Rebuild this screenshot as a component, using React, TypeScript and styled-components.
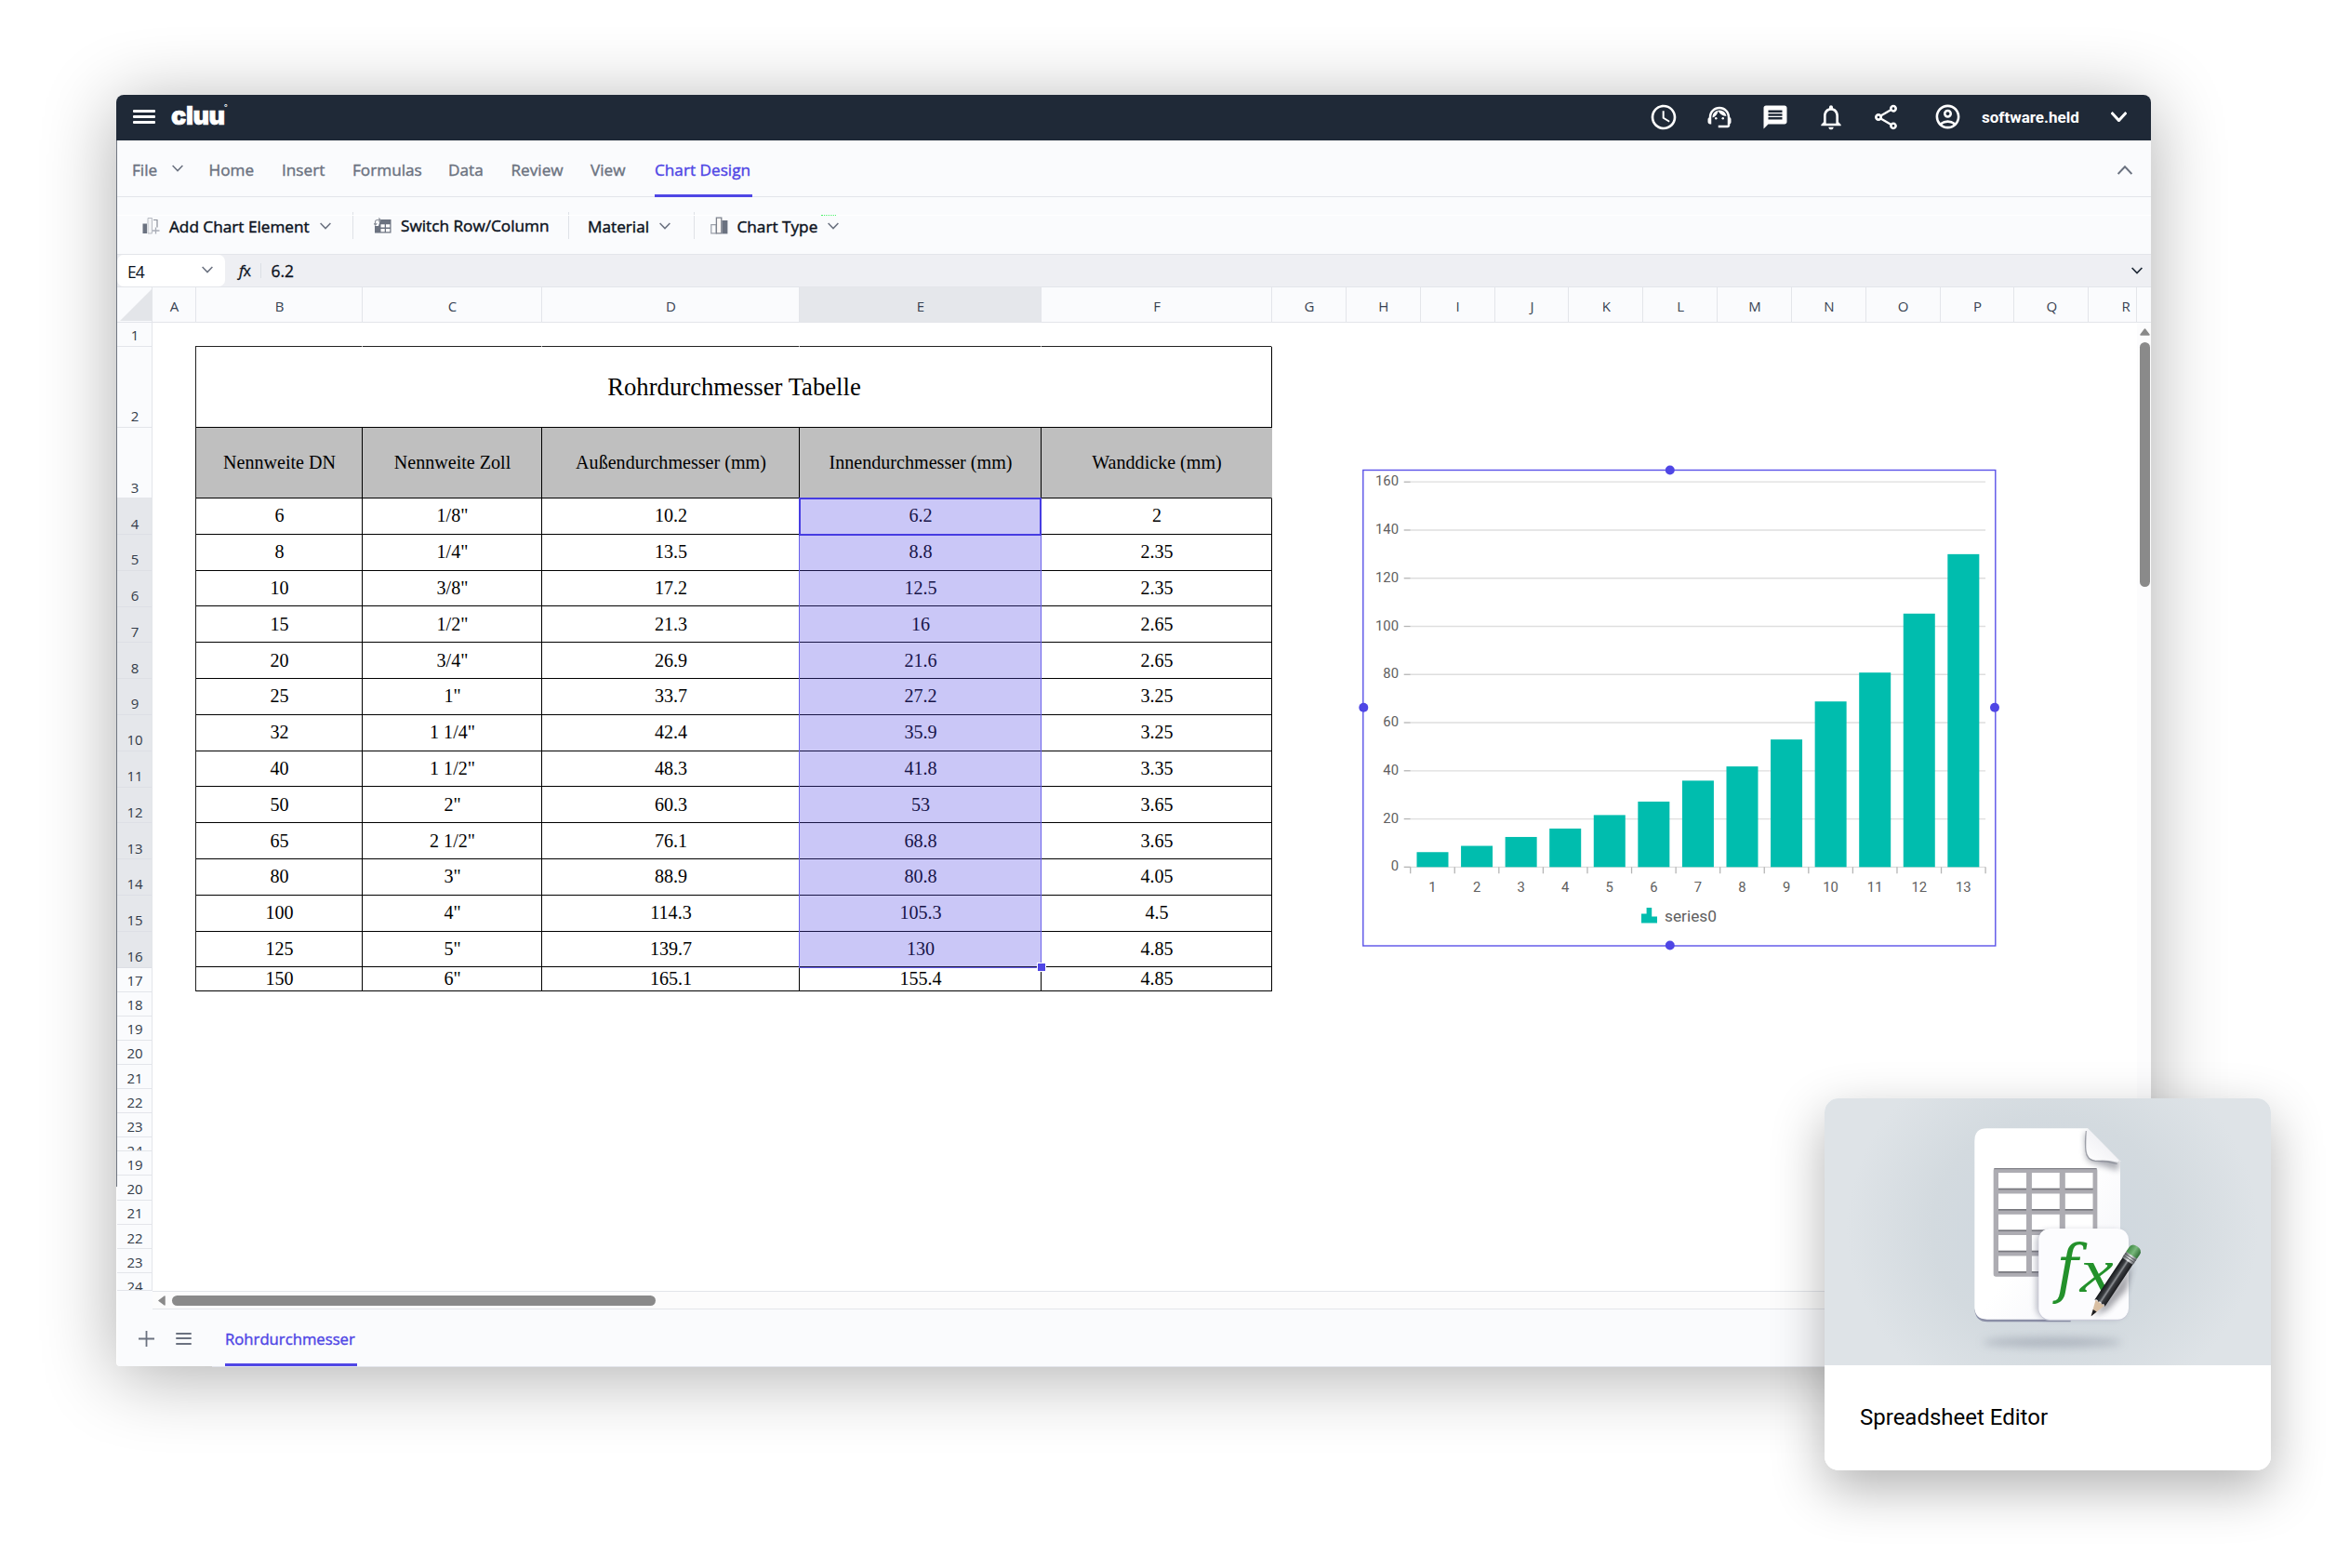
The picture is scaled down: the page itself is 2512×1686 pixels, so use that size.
import React from 'react';
import styled, { createGlobalStyle } from 'styled-components';
import {
  MdAccessTime,
  MdMessage,
  MdNotificationsNone,
  MdOutlineAccountCircle,
  MdOutlineShare,
  MdSupportAgent,
} from 'react-icons/md';

const UI = `'Open Sans', 'Noto Sans', sans-serif`;
const LINE = '#e3e5ea';
const ACCENT = '#4f46e5';

const GlobalStyle = createGlobalStyle`
  body { margin: 0; background: #fff; overflow: hidden; }
  *, *::before, *::after { box-sizing: border-box; }
`;

const Stage = styled.main`
  position: relative;
  width: 2512px;
  height: 1686px;
  padding: 102px 0 0 125px;
  overflow: hidden;
  background: #fff;
  font-family: ${UI};
`;

const Window = styled.section`
  display: flex;
  flex-direction: column;
  width: 2188px;
  height: 1367px;
  border-radius: 8px 8px 4px 4px;
  box-shadow: 0 10px 80px rgba(0, 0, 0, 0.32);
`;

/* ---------- top bar ---------- */

const TopBar = styled.header`
  display: flex;
  align-items: center;
  flex: none;
  height: 49px;
  padding: 0 26px 2px 18px;
  border-radius: 8px 8px 0 0;
  background: #1f2937;
  color: #fff;
`;

const Bars = styled.span<{ $w: number; $gap: number; $t: number; $color: string; $left?: number }>`
  display: flex;
  flex-direction: column;
  gap: ${(p) => p.$gap}px;
  width: ${(p) => p.$w}px;
  margin-left: ${(p) => p.$left ?? 0}px;
  i {
    height: ${(p) => p.$t}px;
    border-radius: 1px;
    background: ${(p) => p.$color};
  }
`;

const Logo = styled.span`
  display: flex;
  margin: -2px 0 0 17px;
  font: 900 27px/30px Inter, sans-serif;
  letter-spacing: -0.4px;
  -webkit-text-stroke: 0.6px #fff;
  sup {
    margin: 0 0 0 -1px;
    font: 400 9px/12px Inter, sans-serif;
    -webkit-text-stroke: 0;
  }
`;

const TopActions = styled.nav`
  display: flex;
  align-items: center;
  margin-left: auto;
`;

const TopIcon = styled.span<{ $w: number }>`
  display: flex;
  justify-content: center;
  width: ${(p) => p.$w}px;
`;

const Account = styled.span`
  width: 139px;
  font: 700 17px/24px Roboto, sans-serif;
`;

/* ---------- ribbon ---------- */

const Body = styled.div`
  position: relative;
  display: flex;
  flex-direction: column;
  flex: 1;
  min-height: 0;
  margin-left: 1px;
  border-radius: 0 0 4px 4px;
  background: #fafbfd;
  &::before {
    content: '';
    position: absolute;
    top: 0;
    left: -1px;
    width: 1px;
    height: 1125px;
    background: #6f7580;
  }
`;

const Tabs = styled.nav`
  display: flex;
  flex: none;
  gap: 30px;
  height: 61px;
  padding: 0 20px 0 16px;
  border-bottom: 1px solid ${LINE};
`;

const Tab = styled.span<{ $w: number; $active?: boolean }>`
  display: flex;
  align-items: center;
  justify-content: space-between;
  width: ${(p) => p.$w}px;
  height: 61px;
  padding-top: 4px;
  border-bottom: 3px solid ${(p) => (p.$active ? ACCENT : 'transparent')};
  color: ${(p) => (p.$active ? ACCENT : '#6b7280')};
  font-size: 17.2px;
  -webkit-text-stroke: 0.4px currentColor;
  white-space: nowrap;
  svg { margin-top: -2px; }
  &:first-child { margin-right: -2.5px; }
`;

const Collapse = styled.span`
  display: flex;
  align-items: center;
  margin-left: auto;
  padding-top: 3px;
`;

const Toolbar = styled.div`
  position: relative;
  display: flex;
  align-items: center;
  flex: none;
  height: 62px;
  border-bottom: 1px solid ${LINE};
  &::after {
    content: '';
    position: absolute;
    top: 19px;
    left: 0;
    right: 0;
    height: 1px;
    background: #fff;
  }
`;

const Spark = styled.i`
  position: absolute;
  z-index: 1;
  top: 19px;
  left: 757px;
  width: 16px;
  border-top: 1px dotted #4bf36b;
`;

const Tool = styled.span<{ $w: number; $pad: number; $up?: boolean }>`
  display: flex;
  align-items: center;
  width: ${(p) => p.$w}px;
  height: 29px;
  padding-left: ${(p) => p.$pad}px;
  border-right: 1px solid #dfe2e7;
  color: #0b1220;
  font-size: 17.2px;
  -webkit-text-stroke: 0.45px currentColor;
  white-space: nowrap;
  > svg:first-child { margin-right: 10px; }
  b {
    margin: ${(p) => (p.$up ? '0' : '2px')} 11px 0 0;
    font-weight: 400;
  }
  &:last-of-type { border-right: 0; }
`;

const FormulaBar = styled.div`
  display: flex;
  align-items: center;
  flex: none;
  height: 35px;
  padding-right: 9px;
  border-bottom: 1px solid ${LINE};
  background: #eeeff3;
  color: #0b1220;
  font-size: 17.4px;
`;

const NameBox = styled.span`
  display: flex;
  align-items: center;
  justify-content: space-between;
  width: 116px;
  height: 34px;
  padding: 1px 13px 0 11px;
  border-radius: 7px;
  background: #fff;
  letter-spacing: -0.8px;
  svg { margin-top: -3px; }
`;

const Fx = styled.span`
  width: 39px;
  padding-left: 15px;
  letter-spacing: -0.6px;
  font-size: 16px;
  line-height: 16px;
  border-right: 1px solid #dcdfe5;
  -webkit-text-stroke: 0.3px currentColor;
  em { font: italic 400 16.5px/16px ${UI}; }
`;

const FormulaValue = styled.span`
  flex: 1;
  padding: 0 0 0 10.5px;
  -webkit-text-stroke: 0.3px currentColor;
`;

/* ---------- sheet ---------- */

const ColumnHeads = styled.div`
  display: flex;
  flex: none;
  height: 38px;
  border-bottom: 1px solid ${LINE};
`;

const Corner = styled.span`
  flex: none;
  width: 38px;
  padding: 2px 0 0 3px;
  border-right: 1px solid ${LINE};
  svg { display: block; }
`;

const HeadCell = styled.span<{ $w: number; $on?: boolean }>`
  display: flex;
  align-items: center;
  justify-content: center;
  flex: none;
  width: ${(p) => p.$w}px;
  padding: 2px 0 0 1px;
  border-right: 1px solid ${LINE};
  background: ${(p) => (p.$on ? '#e5e7eb' : 'transparent')};
  color: #374151;
  font-size: 15px;
`;

const HeadClip = styled.div`
  display: flex;
  width: 2134px;
  overflow: hidden;
  border-right: 1px solid ${LINE};
`;

const SheetRow = styled.div`
  display: flex;
  flex: none;
  height: 1041px;
`;

const RowHeads = styled.div`
  flex: none;
  width: 38px;
  border-right: 1px solid ${LINE};
`;

const RowGroup = styled.div<{ $h: number }>`
  height: ${(p) => p.$h}px;
  overflow: hidden;
  border-bottom: 1px solid ${LINE};
`;

const RowHead = styled.div<{ $h: number; $on?: boolean }>`
  display: flex;
  align-items: flex-end;
  justify-content: center;
  height: ${(p) => p.$h}px;
  padding: 0 0 1.6px 1px;
  border-bottom: 1px solid ${(p) => (p.$on ? '#dddfe5' : LINE)};
  background: ${(p) => (p.$on ? '#e5e7eb' : '#fafbfd')};
  color: #333b48;
  font-size: 15px;
  line-height: 20px;
`;

const Canvas = styled.div`
  position: relative;
  flex: 1;
  background: #fff;
`;

const Table = styled.div`
  position: relative;
  width: 1158px;
  margin: 25px 0 0 46px;
  border-left: 1px solid #222;
  color: #000;
  font: 20.1px/24px 'Liberation Serif', serif;
`;

const Line = styled.div<{ $h: number }>`
  display: flex;
  height: ${(p) => p.$h}px;
`;

const TopEdge = styled.div`
  display: flex;
  height: 1px;
`;

const EdgePart = styled.span<{ $w: number }>`
  width: ${(p) => p.$w}px;
  border-right: 1px solid #bbb;
  background: #222;
`;

const Cell = styled.span<{ $w?: number; $head?: boolean; $title?: boolean }>`
  display: flex;
  align-items: center;
  justify-content: center;
  flex: ${(p) => (p.$w ? 'none' : 1)};
  width: ${(p) => (p.$w ? `${p.$w}px` : 'auto')};
  padding: 0 0 1px 1px;
  border-right: 1px solid #000;
  border-bottom: 1px solid #000;
  background: ${(p) => (p.$head ? '#bfbfbf' : 'transparent')};
  font-size: ${(p) => (p.$title ? '26.7px' : 'inherit')};
  white-space: nowrap;
  ${(p) => p.$head && '&:last-child { border-right-color: #bfbfbf; }'}
`;

const Selection = styled.div`
  position: absolute;
  top: 163px;
  left: 648px;
  width: 261px;
  height: 506px;
  border: 1px solid #6a61ea;
  background: rgba(79, 70, 229, 0.3);
  &::before {
    content: '';
    position: absolute;
    top: -1px;
    left: -1px;
    width: 261px;
    height: 41px;
    border: 2px solid #463ce2;
  }
  &::after {
    content: '';
    position: absolute;
    right: -6px;
    bottom: -5px;
    width: 10px;
    height: 10px;
    border: 1px solid #fff;
    background: ${ACCENT};
  }
`;

const ChartObject = styled.figure`
  position: absolute;
  top: 151px;
  left: 1301px;
  margin: 0;
  svg { display: block; overflow: visible; }
  text { font-family: Roboto, sans-serif; }
`;

const VScroll = styled.div`
  display: flex;
  flex-direction: column;
  flex: none;
  align-items: center;
  gap: 7px;
  width: 15px;
  padding: 6px 0 0 2px;
  background: #fcfcfd;
`;

const Thumb = styled.span<{ $w: number; $h: number }>`
  flex: none;
  width: ${(p) => p.$w}px;
  height: ${(p) => p.$h}px;
  border-radius: 6px;
  background: #8a8a8a;
`;

const HScroll = styled.div`
  display: flex;
  align-items: center;
  flex: none;
  gap: 7px;
  height: 20px;
  padding-left: 6px;
  margin-left: 38px;
  border-top: 1px solid ${LINE};
  border-bottom: 1px solid ${LINE};
  background: #fcfcfc;
  box-shadow: -38px 0 0 #fafbfd, -38px -1px 0 ${LINE};
`;

const Footer = styled.footer`
  display: flex;
  align-items: center;
  flex: 1;
  padding-left: 23px;
`;

const SheetTabs = styled.div`
  display: flex;
  flex: 1;
  align-self: stretch;
  margin-left: 22px;
  padding-left: 14px;
  border-bottom: 1px solid #e2e4ea;
`;

const SheetTab = styled.span`
  display: flex;
  align-items: center;
  width: 142px;
  height: 61px;
  padding-top: 4px;
  border-bottom: 3px solid ${ACCENT};
  color: ${ACCENT};
  font-size: 16.7px;
  -webkit-text-stroke: 0.4px currentColor;
`;

/* ---------- product card ---------- */

const Card = styled.article`
  position: absolute;
  top: 1181px;
  left: 1962px;
  width: 480px;
  height: 400px;
  overflow: hidden;
  border-radius: 15px;
  background: #fff;
`;

const CardShadow = styled(Card)`
  overflow: visible;
  box-shadow: 0 20px 56px rgba(0, 0, 0, 0.3);
`;

const CardArt = styled.div`
  height: 287px;
  background: radial-gradient(ellipse 260px 240px at 245px 140px, #cdd6df 0%, #d3dadf 50%, #dee3e7 85%);
  svg { display: block; }
`;

const CardTitle = styled.h2`
  margin: 0;
  padding: 40px 38px;
  color: #000;
  font: 400 24px/32px Roboto, sans-serif;
`;

/* ---------- data ---------- */

const COLS = [179, 193, 277, 260, 248];
const LETTERS: [string, number][] = [
  ['A', 47], ['B', 179], ['C', 193], ['D', 277], ['E', 260], ['F', 248],
];
const REST = 'GHIJKLMNOPQR'.split('');
const HEADERS = ['Nennweite DN', 'Nennweite Zoll', 'Außendurchmesser (mm)', 'Innendurchmesser (mm)', 'Wanddicke (mm)'];
const ROWS = [
  ['6', '1/8"', '10.2', '6.2', '2'],
  ['8', '1/4"', '13.5', '8.8', '2.35'],
  ['10', '3/8"', '17.2', '12.5', '2.35'],
  ['15', '1/2"', '21.3', '16', '2.65'],
  ['20', '3/4"', '26.9', '21.6', '2.65'],
  ['25', '1"', '33.7', '27.2', '3.25'],
  ['32', '1 1/4"', '42.4', '35.9', '3.25'],
  ['40', '1 1/2"', '48.3', '41.8', '3.35'],
  ['50', '2"', '60.3', '53', '3.65'],
  ['65', '2 1/2"', '76.1', '68.8', '3.65'],
  ['80', '3"', '88.9', '80.8', '4.05'],
  ['100', '4"', '114.3', '105.3', '4.5'],
  ['125', '5"', '139.7', '130', '4.85'],
  ['150', '6"', '165.1', '155.4', '4.85'],
];
const TABS: [string, number][] = [
  ['Home', 48.5], ['Insert', 46], ['Formulas', 73], ['Data', 37.5], ['Review', 55.5], ['View', 39],
];
const SERIES = ROWS.slice(0, 13).map((r) => Number(r[3]));

const rowHeight = (n: number) => {
  if (n === 1) return 26;
  if (n === 2) return 87;
  if (n === 3) return 76.3;
  return n <= 16 ? 38.8 : 26.1;
};
const range = (from: number, to: number) => Array.from({ length: to - from + 1 }, (_, i) => from + i);

/* ---------- drawings ---------- */

const Chevron = ({ w = 12, h = 6, up = false, color = '#6b7280', t = 1.5 }) => (
  <svg width={w} height={h + 2} viewBox={`0 0 ${w} ${h + 2}`} fill="none" stroke={color} strokeWidth={t}>
    <path d={up ? `M.6 ${h + 1}L${w / 2} 1.2L${w - 0.6} ${h + 1}` : `M.6 1L${w / 2} ${h + 0.6}L${w - 0.6} 1`} />
  </svg>
);

const AddElementIcon = () => (
  <svg width="19" height="20" viewBox="0 0 19 20" fill="none">
    <path d="M.5 7.5H5V18H.5z" fill="#6b7280" />
    <path d="M6 1.5h4.5V18H6z" fill="#f3f4f6" stroke="#b9bcc4" />
    <path d="M12 3.5h4v8" stroke="#8b909a" strokeWidth="1.2" />
    <path d="M14.5 11.5v7M11 15h7.5" stroke="#a9adb6" strokeWidth="1.3" />
  </svg>
);

const SwitchIcon = () => (
  <svg width="19" height="18" viewBox="0 0 19 18" fill="none">
    <path d="M7 2h11.5v14.5H1V9h4z" fill="#6b7280" />
    <path d="M7.5 7.2h4.2v3.4H7.5zM13 7.2h4.3v3.4H13zM7.5 12h4.2v3.3H7.5zM13 12h4.3v3.3H13z" fill="#fff" />
    <path d="M1.5 8V4.5a2 2 0 0 1 2-2H7M5.3.5l2 2-2 2M0 6.2l1.6 2 1.7-2" stroke="#8b909a" strokeWidth="1.1" />
  </svg>
);

const ChartTypeIcon = () => (
  <svg width="19" height="19" viewBox="0 0 19 19" fill="none">
    <path d="M.8 8.6h5.4v9.3H.8z" stroke="#9a9ea8" strokeWidth="1.2" />
    <path d="M6.4 1.2h5.4v16.7H6.4z" fill="#fbf8f6" stroke="#7d828d" strokeWidth="1.3" />
    <path d="M12.4 4h6v14.4h-6z" fill="#6b7280" />
  </svg>
);

const X0 = 51.7;
const Y0 = 434.3;
const STEP = 47.57;
const UNIT = 2.588;

const BarChart = () => (
  <svg width="692" height="526" viewBox="0 0 692 526">
    {range(0, 8).map((i) => {
      const y = Y0 - i * 20 * UNIT;
      return (
        <g key={i}>
          <path d={`M${X0} ${y}H${X0 + 13 * STEP}`} stroke="#dedede" strokeWidth="1.3" />
          <path d={`M${X0 - 7} ${y}h7`} stroke="#b5b5b5" strokeWidth="1.3" />
          <text x="39" y={y + 4} textAnchor="end" fontSize="14.8" fill="#606060">{i * 20}</text>
        </g>
      );
    })}
    {range(0, 13).map((i) => (
      <path key={i} d={`M${X0 + i * STEP} ${Y0}v7`} stroke="#b5b5b5" strokeWidth="1.3" />
    ))}
    {SERIES.map((v, i) => (
      <g key={i}>
        <rect x={X0 + i * STEP + 6.8} y={Y0 - v * UNIT} width="34" height={v * UNIT} fill="#00bdae" />
        <text x={X0 + (i + 0.5) * STEP} y="461" textAnchor="middle" fontSize="14.8" fill="#606060">{i + 1}</text>
      </g>
    ))}
    <path d="M300 484.5h5.6v-6.5h5.6v9.500h5.800v7h-17z" fill="#00bdae" />
    <text x="325" y="492.600" fontSize="17.300" fill="#606060">series0</text>
    <rect x="0.800" y="7.500" width="680" height="511.500" fill="none" stroke="#5a52e8" strokeWidth="1.4" />
    {[[330.8, 7.5], [330.8, 518.5], [1.3, 262.7], [680, 262.7]].map(([x, y]) => (
      <circle key={`${x}-${y}`} cx={x} cy={y} r="5" fill={ACCENT} />
    ))}
  </svg>
);

const SpreadsheetArt = () => (
  <svg width="480" height="287" viewBox="66 63 1440 861">
    <defs>
      <filter id="soft" x="-20%" y="-80%" width="140%" height="260%"><feGaussianBlur stdDeviation="14" /></filter>
      <filter id="near" x="-30%" y="-30%" width="160%" height="160%"><feGaussianBlur stdDeviation="9" /></filter>
      <linearGradient id="sheet" x1="0" y1="0" x2="1" y2="1">
        <stop offset="0.5" stopColor="#fff" />
        <stop offset="1" stopColor="#f1f2f7" />
      </linearGradient>
      <linearGradient id="fold" x1="0" y1="1" x2="0.6" y2="0.3">
        <stop offset="0" stopColor="#fff" />
        <stop offset="1" stopColor="#f0f0f4" />
      </linearGradient>
      <linearGradient id="barrel" x1="0" y1="0" x2="1" y2="0">
        <stop offset="0" stopColor="#15171a" />
        <stop offset="0.35" stopColor="#3c3f43" />
        <stop offset="0.5" stopColor="#8f9296" />
        <stop offset="0.62" stopColor="#3a3c40" />
        <stop offset="1" stopColor="#1a1b1e" />
      </linearGradient>
      <linearGradient id="metal" x1="0" y1="0" x2="1" y2="0">
        <stop offset="0" stopColor="#55585c" />
        <stop offset="0.5" stopColor="#e8eaec" />
        <stop offset="1" stopColor="#5f6266" />
      </linearGradient>
      <linearGradient id="rubber" x1="0" y1="0" x2="1" y2="0">
        <stop offset="0" stopColor="#3f8a44" />
        <stop offset="0.5" stopColor="#79b87c" />
        <stop offset="1" stopColor="#2f6e35" />
      </linearGradient>
      <clipPath id="page"><path d="M590 160H915L1020 265V740Q1020 780 980 780H590Q550 780 550 740V200Q550 160 590 160z" /></clipPath>
    </defs>
    <ellipse cx="800" cy="850" rx="225" ry="15" fill="#9ba3af" opacity="0.7" filter="url(#soft)" />
    <path d="M550 742Q552 784 592 784H860V760H560z" fill="#8a8ea6" />
    <path d="M590 160H915L1020 265V738Q1020 776 980 776H590Q550 776 550 736V200Q550 160 590 160z" fill="url(#sheet)" />
    <g clipPath="url(#page)">
      <path d="M905 170L908 245Q912 268 935 272L1012 296L1018 268z" fill="#6c6f7c" opacity="0.55" filter="url(#near)" />
    </g>
    <path d="M911 163Q915 160 920 166L1015 262Q1018 270 1006 268Q975 260 940 264Q908 258 909 225z" fill="url(#fold)" />
    <path d="M910 168Q906 205 909 232Q912 262 940 265Q975 264 1010 274" fill="none" stroke="#777985" strokeWidth="4" opacity="0.6" />
    <rect x="611" y="288" width="335" height="350" rx="8" fill="#adacb2" />
    <path d="M613 290H944" stroke="#77777e" strokeWidth="3" />
    {range(0, 4).map((r) =>
      range(0, 2).map((c) => (
        <g key={`${r}-${c}`}>
          <rect x={627 + c * 107.5} y={303 + r * 67} width="90" height="55" fill="#77777d" />
          <rect x={627 + c * 107.5} y={303 + r * 67} width="90" height="50" fill="#fff" />
        </g>
      )),
    )}
    <rect x="748" y="490" width="290" height="284" rx="38" fill="#5d6078" opacity="0.4" filter="url(#near)" />
    <rect x="757" y="484" width="290" height="296" rx="36" fill="#c9cbd8" />
    <rect x="757" y="483" width="290" height="293" rx="36" fill="#fcfcfe" />
    <g fontStyle="italic" fontSize="226" fill="#23912b">
      <text transform="translate(814 683) scale(0.852 0.91)" fontFamily="'DejaVu Serif', serif">f</text>
      <text transform="translate(890 687) scale(1.075 0.89)" fontFamily="'Liberation Serif', serif">x</text>
    </g>
    <path d="M935 765L1060 600L1040 680L980 745z" fill="#30323c" opacity="0.45" filter="url(#near)" />
    <g transform="translate(926 766) rotate(33.5)">
      <path d="M0 0L-17 -52H17z" fill="#d9bfa3" />
      <path d="M0 0L-7 -22H7z" fill="#1c1d20" />
      <path d="M-20 -50Q-13 -60 -7 -51Q0 -60 7 -51Q13 -60 20 -50V-215H-20z" fill="url(#barrel)" />
      <rect x="-21" y="-237" width="42" height="24" rx="3" fill="url(#metal)" />
      <path d="M-21 -229H21M-21 -221H21" stroke="#4d5054" strokeWidth="2.5" />
      <path d="M-21 -236V-252Q-21 -270 0 -270Q21 -270 21 -252V-236z" fill="url(#rubber)" />
    </g>
  </svg>
);

/* ---------- page ---------- */

export default function App() {
  return (
    <Stage>
      <GlobalStyle />
      <Window>
        <TopBar>
          <Bars $w={24} $gap={3.2} $t={3.2} $color="#fff"><i /><i /><i /></Bars>
          <Logo>cluu<sup>°</sup></Logo>
          <TopActions>
            <TopIcon $w={61}><MdAccessTime size={32} /></TopIcon>
            <TopIcon $w={60}><MdSupportAgent size={30} /></TopIcon>
            <TopIcon $w={60}><MdMessage size={30} /></TopIcon>
            <TopIcon $w={60}><MdNotificationsNone size={32} /></TopIcon>
            <TopIcon $w={58}><MdOutlineShare size={32} /></TopIcon>
            <TopIcon $w={74}><MdOutlineAccountCircle size={31} /></TopIcon>
            <Account>software.held</Account>
            <Chevron w={17} h={9} color="#fff" t={3} />
          </TopActions>
        </TopBar>

        <Body>
          <Tabs>
            <Tab $w={55}>File <Chevron /></Tab>
            {TABS.map(([name, w]) => <Tab key={name} $w={w}>{name}</Tab>)}
            <Tab $w={105} $active>Chart Design</Tab>
            <Collapse><Chevron w={16} h={8} up t={2} /></Collapse>
          </Tabs>

          <Toolbar>
            <Tool $w={254} $pad={27}><AddElementIcon /><b>Add Chart Element</b><Chevron /></Tool>
            <Tool $w={232} $pad={22} $up><SwitchIcon /><b>Switch Row/Column</b></Tool>
            <Tool $w={134.5} $pad={20}><b>Material</b><Chevron /></Tool>
            <Tool $w={170} $pad={17}><ChartTypeIcon /><b>Chart Type</b><Chevron /></Tool>
            <Spark />
          </Toolbar>

          <FormulaBar>
            <NameBox>E4 <Chevron /></NameBox>
            <Fx><em>f</em>x</Fx>
            <FormulaValue>6.2</FormulaValue>
            <Chevron color="#1f2937" t={1.7} />
          </FormulaBar>

          <ColumnHeads>
            <Corner>
              <svg width="34" height="34" viewBox="0 0 34 34"><path d="M34 0V34H0z" fill="#e3e5e9" /></svg>
            </Corner>
            <HeadClip>
              {LETTERS.map(([l, w]) => <HeadCell key={l} $w={w} $on={l === 'E'}>{l}</HeadCell>)}
              {REST.map((l) => <HeadCell key={l} $w={79.85}>{l}</HeadCell>)}
            </HeadClip>
          </ColumnHeads>

          <SheetRow>
            <RowHeads>
              <RowGroup $h={891}>
                {range(1, 24).map((n) => (
                  <RowHead key={n} $h={rowHeight(n)} $on={n >= 4 && n <= 16}>{n}</RowHead>
                ))}
              </RowGroup>
              <RowGroup $h={150}>
                {range(19, 24).map((n) => <RowHead key={n} $h={26.3}>{n}</RowHead>)}
              </RowGroup>
            </RowHeads>
            <Canvas>
              <Table>
                <TopEdge>{COLS.map((w, i) => <EdgePart key={i} $w={w} />)}</TopEdge>
                <Line $h={87}><Cell $title>Rohrdurchmesser Tabelle</Cell></Line>
                <Line $h={76}>
                  {HEADERS.map((h, i) => <Cell key={h} $w={COLS[i]} $head>{h}</Cell>)}
                </Line>
                {ROWS.map((row, r) => (
                  <Line key={r} $h={r === 13 ? 26.1 : 38.8}>
                    {row.map((v, i) => <Cell key={i} $w={COLS[i]}>{v}</Cell>)}
                  </Line>
                ))}
                <Selection />
              </Table>
              <ChartObject><BarChart /></ChartObject>
            </Canvas>
            <VScroll>
              <svg width="11" height="8" viewBox="0 0 11 8"><path d="M5.5 1L10 7H1z" fill="#8a8a8a" stroke="#8a8a8a" strokeWidth="1.5" strokeLinejoin="round" /></svg>
              <Thumb $w={11} $h={263} />
            </VScroll>
          </SheetRow>

          <HScroll>
            <svg width="8" height="11" viewBox="0 0 8 11"><path d="M1 5.5L7 1V10z" fill="#8a8a8a" stroke="#8a8a8a" strokeWidth="1.5" strokeLinejoin="round" /></svg>
            <Thumb $w={520} $h={11} />
          </HScroll>

          <Footer>
            <svg width="17" height="17" viewBox="0 0 17 17"><path d="M8.5 0V17M0 8.5H17" stroke="#6b7280" strokeWidth="1.8" /></svg>
            <Bars $w={17} $gap={3.5} $t={2} $color="#6b7280" $left={23}><i /><i /><i /></Bars>
            <SheetTabs><SheetTab>Rohrdurchmesser</SheetTab></SheetTabs>
          </Footer>
        </Body>
      </Window>

      <CardShadow />
      <Card>
        <CardArt><SpreadsheetArt /></CardArt>
        <CardTitle>Spreadsheet Editor</CardTitle>
      </Card>
    </Stage>
  );
}
